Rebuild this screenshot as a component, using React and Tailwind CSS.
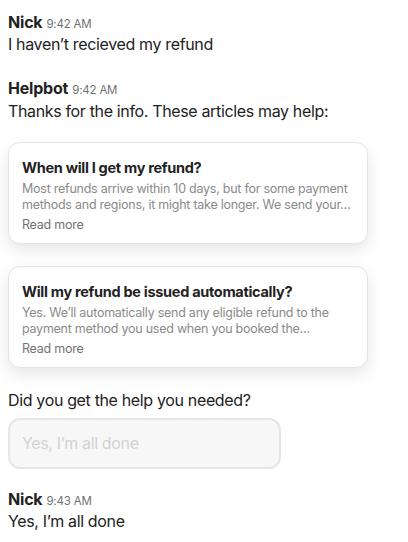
import React from 'react';

const Header = ({ name, time }) => (
  <div className="flex items-baseline gap-1">
    <span className="text-[16px] font-bold text-[#222222] leading-[22px] tracking-[-0.2px]">{name}</span>
    <span className="text-[11.5px] text-[#717171] tracking-[-0.2px]">{time}</span>
  </div>
);

const ArticleCard = ({ title, lines }) => (
  <div className="w-[360px] rounded-xl border border-[#e4e4e4] bg-white px-[13px] pt-[15px] pb-[10px] shadow-[0_6px_16px_rgba(0,0,0,0.10)]">
    <div className="text-[14.5px] font-bold leading-[19px] tracking-[-0.3px] text-[#222222]">{title}</div>
    <p className="mt-[4px] text-[12.5px] leading-[16px] tracking-[-0.25px] text-[#8a8a8a]">
      {lines.map((line) => (
        <span key={line} className="block whitespace-nowrap">{line}</span>
      ))}
    </p>
    <div className="mt-[4px] text-[12.5px] leading-[16px] tracking-[-0.25px] text-[#717171]">Read more</div>
  </div>
);

const App = () => {
  return (
    <div className="min-h-screen bg-white px-2 pt-[11px] font-['Inter',sans-serif] text-[#222222]">
      <div>
        <Header name="Nick" time="9:42 AM" />
        <div className="text-[16px] leading-[23px] tracking-[-0.35px]">I haven’t recieved my refund</div>
      </div>

      <div className="mt-[21px]">
        <Header name="Helpbot" time="9:42 AM" />
        <div className="text-[16px] leading-[23px] tracking-[-0.35px]">Thanks for the info. These articles may help:</div>
      </div>

      <div className="mt-[19px] flex flex-col gap-[22px]">
        <ArticleCard
          title="When will I get my refund?"
          lines={[
            'Most refunds arrive within 10 days, but for some payment',
            'methods and regions, it might take longer. We send your…',
          ]}
        />
        <ArticleCard
          title="Will my refund be issued automatically?"
          lines={[
            'Yes. We’ll automatically send any eligible refund to the',
            'payment method you used when you booked the…',
          ]}
        />
      </div>

      <div className="mt-[21px] text-[16px] leading-[23px] tracking-[-0.35px]">Did you get the help you needed?</div>

      <button className="mt-[6px] flex h-[51px] w-[273px] items-center rounded-xl border-2 border-[#e6e6e6] bg-[#f7f7f7] px-[12px] text-[16px] tracking-[-0.35px] text-[#d2d2d2]">
        Yes, I’m all done
      </button>

      <div className="mt-[19px]">
        <Header name="Nick" time="9:43 AM" />
        <div className="text-[16px] leading-[23px] tracking-[-0.35px]">Yes, I’m all done</div>
      </div>
    </div>
  );
};

export default App;
